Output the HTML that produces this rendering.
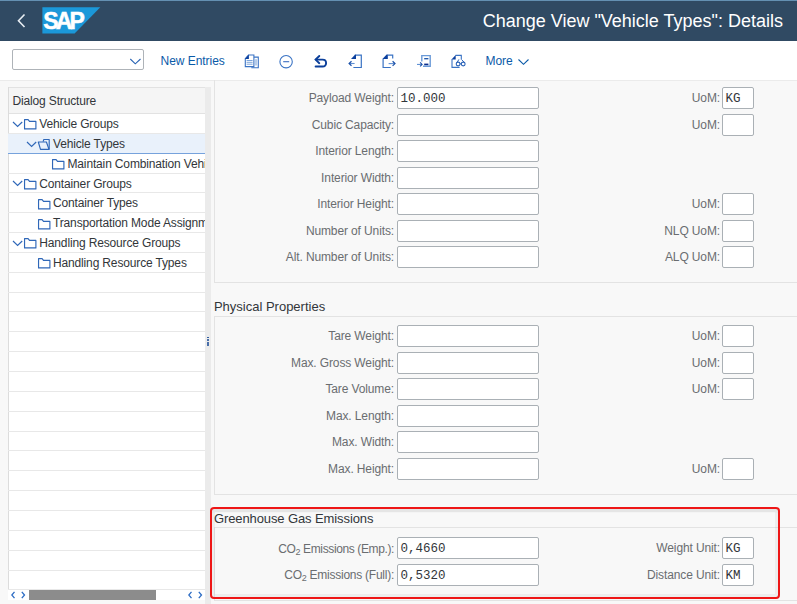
<!DOCTYPE html><html><head><meta charset="utf-8"><style>
*{box-sizing:border-box;margin:0;padding:0}
html,body{width:797px;height:604px;overflow:hidden;background:#f8f8f8;font-family:"Liberation Sans",sans-serif;position:relative}
.a{position:absolute}
#hdr{left:0;top:0;width:797px;height:41px;background:#304a63;border-top:1px solid #6490b2}
#title{right:14px;top:10px;color:#fff;font-size:18px;white-space:nowrap}
#tb{left:0;top:41px;width:797px;height:39px;background:#fff}
.inp{position:absolute;background:#fff;border:1px solid #aab0b5;border-radius:2px;font-family:"Liberation Mono",monospace;font-size:12.5px;color:#32363a;padding-left:2.5px;padding-top:1.3px;line-height:20px;white-space:nowrap}
.lbl{position:absolute;color:#6a6d70;font-size:12px;white-space:nowrap;text-align:right;letter-spacing:-0.12px}
.sec{position:absolute;border:1px solid #e3e3e3}
.sttl{position:absolute;color:#32363a;font-size:13px;white-space:nowrap;letter-spacing:0}
#lp{left:8px;top:87px;width:197px;height:513px;background:#fff;overflow:hidden}
.row{position:absolute;left:0;width:197px;height:19.85px;border-bottom:1px solid #e8e8e8}
.tx{position:absolute;font-size:12px;color:#32363a;white-space:nowrap;letter-spacing:-0.15px}
.ic{position:absolute}
</style></head><body>
<div id="hdr" class="a">
<svg class="a" style="left:15.3px;top:11.2px" width="14" height="18" viewBox="0 0 14 18"><path d="M9.5 2.5 L3.5 8.8 L9.5 15" fill="none" stroke="#e8eef3" stroke-width="1.6"/></svg>
<svg class="a" style="left:42px;top:5.2px" width="59" height="29" viewBox="0 0 59 29"><polygon points="0.4,1.3 58.3,1.3 32.6,27.6 0.4,27.6" fill="#1b98d9"/>
<text x="1.2" y="23.3" fill="#fff" stroke="#fff" stroke-width="0.5" font-family="Liberation Sans" font-weight="bold" font-size="23" letter-spacing="-2.8">SAP</text></svg>
<div id="title" class="a">Change View "Vehicle Types": Details</div>
</div>
<div id="tb" class="a">
<div class="a" style="left:12px;top:8px;width:132px;height:21px;border:1px solid #aeb3b8;border-radius:2px;background:#fff"></div>
<svg class="a" style="left:129px;top:17px" width="13" height="8" viewBox="0 0 13 8"><path d="M1.3 1 L6.3 5.8 L11.5 1" fill="none" stroke="#2a64b4" stroke-width="1.1"/></svg>
<div class="a" style="left:160.6px;top:13px;font-size:12px;color:#0a5aa8;letter-spacing:-0.05px">New Entries</div>
<div class="a" style="left:485.6px;top:13px;font-size:12px;color:#0a5aa8;letter-spacing:-0.1px">More</div>
<svg class="a" style="left:517px;top:17px" width="13" height="8" viewBox="0 0 13 8"><path d="M1.5 1.5 L6.5 6.3 L11.5 1.5" fill="none" stroke="#0a5aa8" stroke-width="1.1"/></svg>
</div>

<svg class="ic" style="left:242px;top:52px" width="20" height="18" viewBox="0 0 20 18">
 <path d="M11.9 5.1 H16.3 V15.8 H9.3" fill="none" stroke="#3a73c4" stroke-width="1.1"/>
 <path d="M14 7.2 V13.5" stroke="#6c9ad6" stroke-width="1"/>
 <path d="M3.3 6.5 L6.5 3 H11.9 V14.6 H3.3 Z" fill="none" stroke="#3a73c4" stroke-width="1.1"/>
 <path d="M2.9 6.9 L6.9 2.6 V6.9 Z" fill="#0a3f9e"/>
 <path d="M4.6 8.5 H10.6 M4.6 10.3 H10.6 M4.6 12.2 H10.6" stroke="#6c9ad6" stroke-width="0.9"/>
</svg>
<svg class="ic" style="left:278px;top:52px" width="16" height="18" viewBox="0 0 16 18">
 <circle cx="8.1" cy="9.7" r="6.2" fill="none" stroke="#3a73c4" stroke-width="1.1"/>
 <path d="M5.2 9.7 H11.2" stroke="#3a6cc0" stroke-width="1.1"/>
</svg>
<svg class="ic" style="left:311px;top:52px" width="18" height="18" viewBox="0 0 18 18">
 <path d="M8.3 4 L4.6 7.6 L8.3 11.2" fill="none" stroke="#0b3f9a" stroke-width="1.9" stroke-linecap="round"/>
 <path d="M4.8 7.6 H11.6 C13.8 7.6 15.1 9 15.1 11 C15.1 13 13.8 14.5 11.6 14.5 H4.6" fill="none" stroke="#0b3f9a" stroke-width="1.9" stroke-linecap="round"/>
</svg>
<svg class="ic" style="left:345px;top:52px" width="18" height="18" viewBox="0 0 18 18">
 <path d="M9.8 3.2 H16.3 V15.5 H8.4" fill="none" stroke="#3a73c4" stroke-width="1.2"/>
 <path d="M6 6.9 L10 2.7 H11 V6.9 Z" fill="#0a3f9e"/>
 <path d="M4.2 11.5 H9.6" stroke="#5f8fd2" stroke-width="1.1"/>
 <path d="M6.5 9.2 L4.1 11.5 L6.5 13.8" fill="none" stroke="#1a50a8" stroke-width="1.2"/>
</svg>
<svg class="ic" style="left:379px;top:52px" width="18" height="18" viewBox="0 0 18 18">
 <path d="M8.6 3.2 H13.7 V6.4 M4.1 6.8 V15.5 H11.8" fill="none" stroke="#3a73c4" stroke-width="1.2"/>
 <path d="M3.5 6.9 L7.6 2.6 H8.8 V6.9 Z" fill="#0a3f9e"/>
 <path d="M9.6 11.6 H15.8" stroke="#5f8fd2" stroke-width="1.1"/>
 <path d="M13.6 9.3 L16 11.6 L13.6 13.9" fill="none" stroke="#1a50a8" stroke-width="1.2"/>
</svg>
<svg class="ic" style="left:414px;top:52px" width="18" height="18" viewBox="0 0 18 18">
 <path d="M7.8 9.6 V3.6 H16.2 V14.2 H9" fill="none" stroke="#6a9ad8" stroke-width="1.4"/>
 <path d="M10.2 6.7 H14.4" stroke="#1550a8" stroke-width="1.3"/>
 <path d="M10.2 12.4 H14.4" stroke="#0a2c8c" stroke-width="1.6"/>
 <path d="M3 12.4 H8" stroke="#4f86cf" stroke-width="1"/>
 <path d="M6.1 10.4 L8.1 12.4 L6.1 14.4" fill="none" stroke="#1a50a8" stroke-width="1.1"/>
</svg>
<svg class="ic" style="left:448px;top:52px" width="20" height="18" viewBox="0 0 20 18">
 <path d="M7.5 3.4 H13.3 V7.6 M4 7.2 V15.4 H11.6" fill="none" stroke="#3a73c4" stroke-width="1.1"/>
 <path d="M3.5 7.4 L7.7 3 V7.4 Z" fill="#0a3f9e"/>
 <circle cx="10.1" cy="12" r="1.9" fill="none" stroke="#2a63b8" stroke-width="1.1"/>
 <circle cx="15.2" cy="12" r="1.9" fill="none" stroke="#2a63b8" stroke-width="1.1"/>
 <path d="M9.2 10.2 L10.9 7.4 M16.1 10.2 L13.6 7.6 M12 11.8 H13.3" fill="none" stroke="#2a63b8" stroke-width="1"/>
</svg>

<div id="lp" class="a">
<div class="a" style="left:0;top:0;width:197px;height:27px;background:#f5f5f5;border-top:1px solid #e2e2e2;border-bottom:1px solid #e2e2e2"></div>
<div class="tx" style="left:4.5px;top:7.4px">Dialog Structure</div>
<div class="a" style="left:0;top:0;width:1px;height:513px;background:#dcdcdc"></div>
<div class="row" style="top:27.00px"></div>
<div class="row" style="top:46.85px;background:#e9f1fb;border-bottom:1.3px solid #76a2dc"></div>
<div class="row" style="top:66.70px"></div>
<div class="row" style="top:86.55px"></div>
<div class="row" style="top:106.40px"></div>
<div class="row" style="top:126.25px"></div>
<div class="row" style="top:146.10px"></div>
<div class="row" style="top:165.95px"></div>
<div class="row" style="top:185.80px"></div>
<div class="row" style="top:205.65px"></div>
<div class="row" style="top:225.50px"></div>
<div class="row" style="top:245.35px"></div>
<div class="row" style="top:265.20px"></div>
<div class="row" style="top:285.05px"></div>
<div class="row" style="top:304.90px"></div>
<div class="row" style="top:324.75px"></div>
<div class="row" style="top:344.60px"></div>
<div class="row" style="top:364.45px"></div>
<div class="row" style="top:384.30px"></div>
<div class="row" style="top:404.15px"></div>
<div class="row" style="top:424.00px"></div>
<div class="row" style="top:443.85px"></div>
<div class="row" style="top:463.70px"></div>
<div class="row" style="top:483.55px"></div>
<div class="row" style="top:503.40px"></div>
<svg class="ic" style="left:3.80px;top:33.70px" width="12" height="7" viewBox="0 0 12 7"><path d="M1 1 L5.6 5.5 L10.2 1" fill="none" stroke="#2f67b8" stroke-width="1.15"/></svg>
<svg class="ic" style="left:15.30px;top:31.30px" width="15" height="13" viewBox="0 0 15 13"><path d="M1.55 1.55 H5.1 L6.5 3.4 H12.9 V10.9 H1.55 Z" fill="none" stroke="#2f67b8" stroke-width="1.15" stroke-linejoin="round"/></svg>
<div class="tx" style="left:31.3px;top:30.00px">Vehicle Groups</div>
<svg class="ic" style="left:17.90px;top:53.75px" width="12" height="7" viewBox="0 0 12 7"><path d="M1 1 L5.6 5.5 L10.2 1" fill="none" stroke="#2f67b8" stroke-width="1.15"/></svg>
<svg class="ic" style="left:29.30px;top:51.15px" width="14" height="13" viewBox="0 0 14 13"><path d="M6.1 3.7 L6.8 1.5 H12.2 V11.4" fill="none" stroke="#2f67b8" stroke-width="1.15" stroke-linejoin="round"/><path d="M1.3 4 H9.4 L12 11.4 H3.5 Z" fill="none" stroke="#2f67b8" stroke-width="1.15" stroke-linejoin="round"/></svg>
<div class="tx" style="left:45.0px;top:49.85px">Vehicle Types</div>
<svg class="ic" style="left:43.30px;top:71.00px" width="15" height="13" viewBox="0 0 15 13"><path d="M1.55 1.55 H5.1 L6.5 3.4 H12.9 V10.9 H1.55 Z" fill="none" stroke="#2f67b8" stroke-width="1.15" stroke-linejoin="round"/></svg>
<div class="tx" style="left:59.5px;top:69.70px">Maintain Combination Vehicle Types</div>
<svg class="ic" style="left:3.80px;top:93.25px" width="12" height="7" viewBox="0 0 12 7"><path d="M1 1 L5.6 5.5 L10.2 1" fill="none" stroke="#2f67b8" stroke-width="1.15"/></svg>
<svg class="ic" style="left:15.30px;top:90.85px" width="15" height="13" viewBox="0 0 15 13"><path d="M1.55 1.55 H5.1 L6.5 3.4 H12.9 V10.9 H1.55 Z" fill="none" stroke="#2f67b8" stroke-width="1.15" stroke-linejoin="round"/></svg>
<div class="tx" style="left:31.3px;top:89.55px">Container Groups</div>
<svg class="ic" style="left:29.10px;top:110.70px" width="15" height="13" viewBox="0 0 15 13"><path d="M1.55 1.55 H5.1 L6.5 3.4 H12.9 V10.9 H1.55 Z" fill="none" stroke="#2f67b8" stroke-width="1.15" stroke-linejoin="round"/></svg>
<div class="tx" style="left:45.0px;top:109.40px">Container Types</div>
<svg class="ic" style="left:29.10px;top:130.55px" width="15" height="13" viewBox="0 0 15 13"><path d="M1.55 1.55 H5.1 L6.5 3.4 H12.9 V10.9 H1.55 Z" fill="none" stroke="#2f67b8" stroke-width="1.15" stroke-linejoin="round"/></svg>
<div class="tx" style="left:45.0px;top:129.25px">Transportation Mode Assignment</div>
<svg class="ic" style="left:3.80px;top:152.80px" width="12" height="7" viewBox="0 0 12 7"><path d="M1 1 L5.6 5.5 L10.2 1" fill="none" stroke="#2f67b8" stroke-width="1.15"/></svg>
<svg class="ic" style="left:15.30px;top:150.40px" width="15" height="13" viewBox="0 0 15 13"><path d="M1.55 1.55 H5.1 L6.5 3.4 H12.9 V10.9 H1.55 Z" fill="none" stroke="#2f67b8" stroke-width="1.15" stroke-linejoin="round"/></svg>
<div class="tx" style="left:31.3px;top:149.10px">Handling Resource Groups</div>
<svg class="ic" style="left:29.10px;top:170.25px" width="15" height="13" viewBox="0 0 15 13"><path d="M1.55 1.55 H5.1 L6.5 3.4 H12.9 V10.9 H1.55 Z" fill="none" stroke="#2f67b8" stroke-width="1.15" stroke-linejoin="round"/></svg>
<div class="tx" style="left:45.0px;top:168.95px">Handling Resource Types</div>
<div class="a" style="left:0;top:503px;width:197px;height:10px;background:#fff"></div>
<div class="a" style="left:21px;top:503px;width:127px;height:10px;background:#8c8c8c"></div>
<svg class="ic" style="left:3px;top:504px" width="5" height="8" viewBox="0 0 5 8"><path d="M3.5 0.8 L0.8 4 L3.5 7.2" fill="none" stroke="#2c6cc4" stroke-width="1.3"/></svg>
<svg class="ic" style="left:13px;top:504px" width="5" height="8" viewBox="0 0 5 8"><path d="M0.8 0.8 L3.5 4 L0.8 7.2" fill="none" stroke="#2c6cc4" stroke-width="1.3"/></svg>
<svg class="ic" style="left:179.5px;top:504px" width="5" height="8" viewBox="0 0 5 8"><path d="M3.5 0.8 L0.8 4 L3.5 7.2" fill="none" stroke="#2c6cc4" stroke-width="1.3"/></svg>
<svg class="ic" style="left:189.5px;top:504px" width="5" height="8" viewBox="0 0 5 8"><path d="M0.8 0.8 L3.5 4 L0.8 7.2" fill="none" stroke="#2c6cc4" stroke-width="1.3"/></svg>
</div>
<div class="a" style="left:0;top:80px;width:797px;height:1px;background:#ebebeb"></div>
<div class="a" style="left:205px;top:87px;width:6px;height:517px;background:#ebebeb"></div>
<div class="a" style="left:207.3px;top:336.50px;width:1.8px;height:1.8px;background:#1a4a96;border-radius:50%"></div>
<div class="a" style="left:207.3px;top:339.15px;width:1.8px;height:1.8px;background:#1a4a96;border-radius:50%"></div>
<div class="a" style="left:207.3px;top:341.80px;width:1.8px;height:1.8px;background:#1a4a96;border-radius:50%"></div>
<div class="a" style="left:207.3px;top:344.45px;width:1.8px;height:1.8px;background:#1a4a96;border-radius:50%"></div>
<div class="sec" style="left:214px;top:80px;width:600px;height:203px;border-top:none"></div>
<div class="sttl" style="left:213.9px;top:299px">Physical Properties</div>
<div class="sec" style="left:214px;top:315.5px;width:600px;height:179px"></div>
<div class="sttl" style="left:213.9px;top:510.5px;letter-spacing:-0.1px">Greenhouse Gas Emissions</div>
<div class="sec" style="left:214px;top:526.5px;width:600px;height:74px"></div>
<div class="lbl" style="right:403px;top:91.20px">Payload Weight:</div><div class="inp" style="left:397px;top:87.20px;width:142px;height:22px">10.000</div>
<div class="lbl" style="right:403px;top:117.70px">Cubic Capacity:</div><div class="inp" style="left:397px;top:113.70px;width:142px;height:22px"></div>
<div class="lbl" style="right:403px;top:144.20px">Interior Length:</div><div class="inp" style="left:397px;top:140.20px;width:142px;height:22px"></div>
<div class="lbl" style="right:403px;top:170.70px">Interior Width:</div><div class="inp" style="left:397px;top:166.70px;width:142px;height:22px"></div>
<div class="lbl" style="right:403px;top:197.20px">Interior Height:</div><div class="inp" style="left:397px;top:193.20px;width:142px;height:22px"></div>
<div class="lbl" style="right:403px;top:223.70px">Number of Units:</div><div class="inp" style="left:397px;top:219.70px;width:142px;height:22px"></div>
<div class="lbl" style="right:403px;top:250.20px">Alt. Number of Units:</div><div class="inp" style="left:397px;top:246.20px;width:142px;height:22px"></div>
<div class="lbl" style="right:77px;top:91.20px">UoM:</div><div class="inp" style="left:722px;top:87.20px;width:32px;height:22px">KG</div>
<div class="lbl" style="right:77px;top:117.70px">UoM:</div><div class="inp" style="left:722px;top:113.70px;width:32px;height:22px"></div>
<div class="lbl" style="right:77px;top:197.20px">UoM:</div><div class="inp" style="left:722px;top:193.20px;width:32px;height:22px"></div>
<div class="lbl" style="right:77px;top:223.70px">NLQ UoM:</div><div class="inp" style="left:722px;top:219.70px;width:32px;height:22px"></div>
<div class="lbl" style="right:77px;top:250.20px">ALQ UoM:</div><div class="inp" style="left:722px;top:246.20px;width:32px;height:22px"></div>
<div class="lbl" style="right:403px;top:329.20px">Tare Weight:</div><div class="inp" style="left:397px;top:325.20px;width:142px;height:22px"></div>
<div class="lbl" style="right:403px;top:355.70px">Max. Gross Weight:</div><div class="inp" style="left:397px;top:351.70px;width:142px;height:22px"></div>
<div class="lbl" style="right:403px;top:382.20px">Tare Volume:</div><div class="inp" style="left:397px;top:378.20px;width:142px;height:22px"></div>
<div class="lbl" style="right:403px;top:408.70px">Max. Length:</div><div class="inp" style="left:397px;top:404.70px;width:142px;height:22px"></div>
<div class="lbl" style="right:403px;top:435.20px">Max. Width:</div><div class="inp" style="left:397px;top:431.20px;width:142px;height:22px"></div>
<div class="lbl" style="right:403px;top:461.70px">Max. Height:</div><div class="inp" style="left:397px;top:457.70px;width:142px;height:22px"></div>
<div class="lbl" style="right:77px;top:329.20px">UoM:</div><div class="inp" style="left:722px;top:325.20px;width:32px;height:22px"></div>
<div class="lbl" style="right:77px;top:355.70px">UoM:</div><div class="inp" style="left:722px;top:351.70px;width:32px;height:22px"></div>
<div class="lbl" style="right:77px;top:382.20px">UoM:</div><div class="inp" style="left:722px;top:378.20px;width:32px;height:22px"></div>
<div class="lbl" style="right:77px;top:461.70px">UoM:</div><div class="inp" style="left:722px;top:457.70px;width:32px;height:22px"></div>
<div class="lbl" style="right:403px;top:542.00px;letter-spacing:-0.38px">CO<span style="font-size:9px;position:relative;top:1.5px">2</span> Emissions (Emp.):</div><div class="inp" style="left:397px;top:537.20px;width:142px;height:22px">0,4660</div>
<div class="lbl" style="right:403px;top:568.40px;letter-spacing:-0.25px">CO<span style="font-size:9px;position:relative;top:1.5px">2</span> Emissions (Full):</div><div class="inp" style="left:397px;top:563.60px;width:142px;height:22px">0,5320</div>
<div class="lbl" style="right:77px;top:541.20px">Weight Unit:</div><div class="inp" style="left:722px;top:537.20px;width:32px;height:22px">KG</div>
<div class="lbl" style="right:77px;top:567.60px">Distance Unit:</div><div class="inp" style="left:722px;top:563.60px;width:32px;height:22px">KM</div>
<div class="a" style="left:210px;top:506.8px;width:570.3px;height:92.2px;border:2px solid #ee1616;border-radius:4px;box-shadow:inset 0 0 0 3px rgba(0,0,0,0.045),inset 0 3.5px 0 0 rgba(0,0,0,0.03)"></div>
</body></html>
